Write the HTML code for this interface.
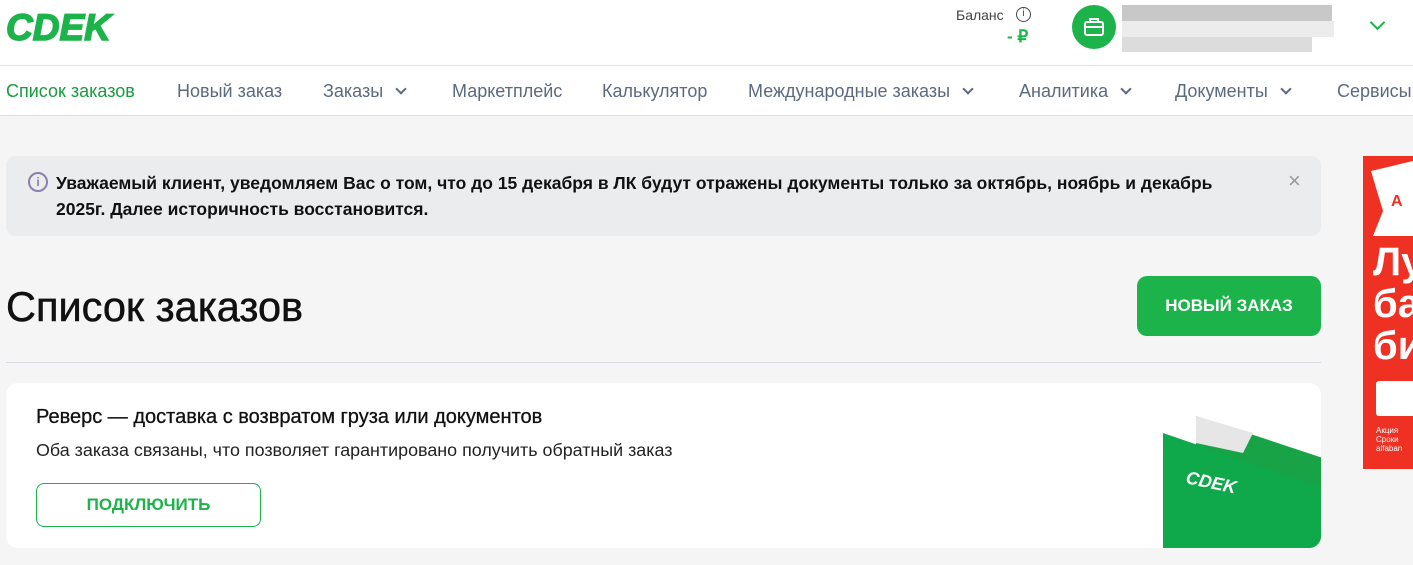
<!DOCTYPE html>
<html><head><meta charset="utf-8"><style>
*{box-sizing:border-box;margin:0;padding:0}
body{width:1413px;height:565px;overflow:hidden;background:#f5f5f6;font-family:"Liberation Sans",Arial,sans-serif;position:relative}
.hdr{position:absolute;left:0;top:0;width:1413px;height:66px;background:#fff;border-bottom:1px solid #e0e0e0}
.nav{position:absolute;left:0;top:66px;width:1413px;height:50px;background:#fff;border-bottom:1px solid #e0e0e0;white-space:nowrap}
.nav span{position:absolute;top:15px;font-size:18px;color:#5b6a7f}
.chev{display:inline-block;width:8px;height:8px;border-right:2.5px solid #5b6a7f;border-bottom:2.5px solid #5b6a7f;transform:rotate(45deg);margin-left:14px;position:relative;top:-4px}
.alert{position:absolute;left:6px;top:156px;width:1315px;height:80px;background:#ebecee;border-radius:10px}
.alert p{position:absolute;left:50px;top:14px;font-size:17.5px;font-weight:bold;color:#111;line-height:26px;width:1180px}
h1{position:absolute;left:6px;top:283px;font-size:41.5px;font-weight:normal;color:#111;-webkit-text-stroke:0.5px #111}
.btn{position:absolute;left:1137px;top:276px;width:184px;height:60px;background:#1db34b;border-radius:10px;color:#fff;font-weight:bold;font-size:17px;text-align:center;line-height:60px}
.hr{position:absolute;left:6px;top:362px;width:1315px;height:1px;background:#d8dbe2}
.card{position:absolute;left:6px;top:383px;width:1315px;height:165px;background:#fff;border-radius:12px;overflow:hidden}
.ad{position:absolute;left:1363px;top:156px;width:50px;height:313px;background:#ef3124;overflow:hidden}
</style></head><body>
<div class="hdr">
<div style="position:absolute;left:6px;top:7px;font-size:37px;font-weight:900;font-style:italic;color:#1db34b;transform:scaleX(1.0);transform-origin:left;-webkit-text-stroke:1.5px #1db34b">CDEK</div>
<div style="position:absolute;left:956px;top:7px;font-size:14px;color:#444">Баланс</div>
<div style="position:absolute;left:1016px;top:7px;width:15px;height:15px;border:1.5px solid #444;border-radius:50%;font-size:10px;text-align:center;line-height:12px;color:#444">i</div>
<div style="position:absolute;left:1007px;top:27px;font-size:17px;font-weight:bold;color:#1db34b">- ₽</div>
<div style="position:absolute;left:1072px;top:5px;width:44px;height:44px;border-radius:50%;background:#1db34b">
<svg width="44" height="44" viewBox="0 0 44 44"><rect x="13" y="17" width="18" height="13" rx="2" fill="none" stroke="#fff" stroke-width="2"/><path d="M18 17v-3h8v3M13 22h18" fill="none" stroke="#fff" stroke-width="2"/></svg></div>
<div style="position:absolute;left:1122px;top:5px;width:210px;height:16px;background:#c8c8c8"></div>
<div style="position:absolute;left:1122px;top:21px;width:212px;height:16px;background:#ececec"></div>
<div style="position:absolute;left:1122px;top:37px;width:190px;height:15px;background:#dcdcdc"></div>
<div style="position:absolute;left:1372px;top:17px;width:11px;height:11px;border-right:2.5px solid #1db34b;border-bottom:2.5px solid #1db34b;transform:rotate(45deg)"></div>
</div>
<div class="nav">
<span style="left:6px;color:#1a9b3f">Список заказов</span>
<span style="left:177px">Новый заказ</span>
<span style="left:323px">Заказы<i class="chev"></i></span>
<span style="left:452px">Маркетплейс</span>
<span style="left:602px">Калькулятор</span>
<span style="left:748px">Международные заказы<i class="chev"></i></span>
<span style="left:1019px">Аналитика<i class="chev"></i></span>
<span style="left:1175px">Документы<i class="chev"></i></span>
<span style="left:1337px">Сервисы</span>
</div>
<div class="alert">
<div style="position:absolute;left:22px;top:16px;width:20px;height:20px;border:2px solid #8a7fb0;border-radius:50%;color:#8a7fb0;font-size:12px;font-weight:bold;text-align:center;line-height:16px">i</div>
<p>Уважаемый клиент, уведомляем Вас о том, что до 15 декабря в ЛК будут отражены документы только за октябрь, ноябрь и декабрь 2025г. Далее историчность восстановится.</p>
<div style="position:absolute;left:1282px;top:12px;font-size:22px;color:#999">×</div>
</div>
<h1>Список заказов</h1>
<div class="btn">НОВЫЙ ЗАКАЗ</div>
<div class="hr"></div>
<div class="card">
<div style="position:absolute;left:30px;top:23px;font-size:20px;color:#111;-webkit-text-stroke:0.3px #111">Реверс — доставка с возвратом груза или документов</div>
<div style="position:absolute;left:30px;top:57px;font-size:17.9px;color:#222">Оба заказа связаны, что позволяет гарантировано получить обратный заказ</div>
<div style="position:absolute;left:30px;top:100px;width:225px;height:44px;border:1px solid #1db34b;border-radius:8px;color:#1db34b;font-size:17px;font-weight:bold;text-align:center;line-height:42px">ПОДКЛЮЧИТЬ</div>
<svg style="position:absolute;left:1157px;top:30px" width="160" height="135"><polygon points="33,3 160,45 160,135 33,135" fill="#17a346"/><polygon points="33,3 90,20 80,40 33,30" fill="#e6e6e6"/><polygon points="0,20 160,75 160,135 0,135" fill="#0fa84a"/><text x="22" y="70" fill="#fff" font-size="18" font-weight="bold" font-style="italic" transform="rotate(12 22 70)">CDEK</text></svg>
</div>
<div class="ad">
<svg style="position:absolute;left:0;top:0" width="50" height="100"><polygon points="8,15 50,5 50,80 10,80 20,55" fill="#fff"/><text x="28" y="50" fill="#ef3124" font-size="16" font-weight="bold">А</text></svg>
<div style="position:absolute;left:10px;top:85px;color:#fff;font-size:40px;font-weight:bold;line-height:42px">Лу<br>ба<br>би</div>
<div style="position:absolute;left:13px;top:225px;width:40px;height:35px;background:#fff;border-radius:3px"></div>
<div style="position:absolute;left:13px;top:270px;color:#fff;font-size:8px;line-height:9px">Акция<br>Сроки<br>alfaban</div>
</div>
</body></html>
